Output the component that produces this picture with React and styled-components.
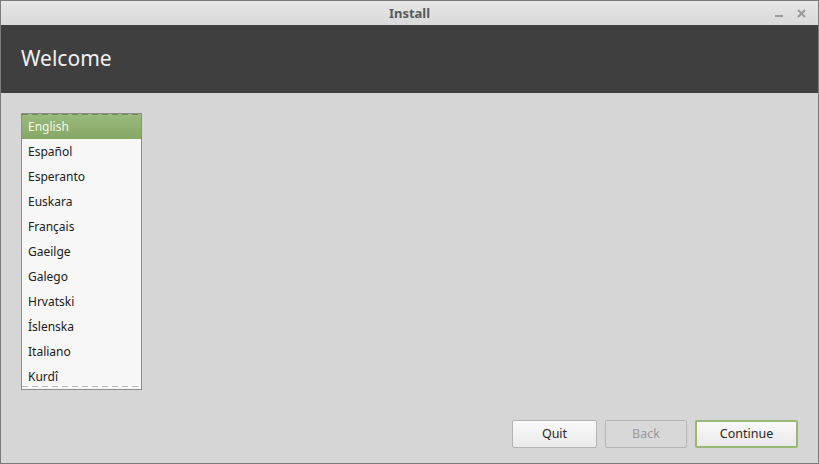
import React from 'react';
import styled, { createGlobalStyle } from 'styled-components';

const GlobalStyle = createGlobalStyle`
    html, body {
        margin : 0;
        padding : 0;
        background : #d6d6d6;
        font-family : "Noto Sans", "DejaVu Sans", sans-serif;
    }
`;

const Window = styled.div`
    box-sizing : border-box;
    width : 819px;
    height : 464px;
    border : 1px solid #7b7b7b;
    display : flex;
    flex-direction : column;
    background : #d6d6d6;
`;

const TitleBar = styled.div`
    height : 24px;
    display : flex;
    align-items : center;
    justify-content : center;
    position : relative;
    background : linear-gradient(#e6e6e6, #d9d9d9);
    color : #5a5a5a;
    font-size : 13px;
    font-weight : bold;
`;

const WindowControls = styled.div`
    position : absolute;
    right : 12px;
    top : 0;
    height : 24px;
    display : flex;
    align-items : center;
    gap : 13px;
`;

const Header = styled.div`
    height : 68px;
    background : #3f3f3f;
    color : #f0f0f0;
    font-size : 21px;
    display : flex;
    align-items : center;
    padding-left : 20px;
    padding-bottom : 2px;
    box-sizing : border-box;
`;

const Body = styled.div`
    flex : 1;
    display : flex;
    flex-direction : column;
    justify-content : space-between;
    padding : 20px 20px 15px 20px;
`;

const List = styled.div`
    width : 119px;
    border : 1px solid #8c8c8c;
    background : #f7f7f7;
    position : relative;
`;

const Row = styled.div`
    height : 25px;
    line-height : 25px;
    padding-left : 6px;
    font-size : 12px;
    color : ${p => (p.selected ? '#f4f7ee' : '#202020')};
    background : ${p => (p.selected ? 'linear-gradient(#9bba7c, #85a765)' : 'transparent')};
`;

const Dashes = styled.div`
    position : absolute;
    left : 0;
    right : 0;
    height : 1px;
    ${p => (p.top ? 'top : 0;' : 'bottom : 2px;')}
    background : repeating-linear-gradient(90deg, ${p => p.color} 0 6px, transparent 6px 10px);
`;

const ButtonRow = styled.div`
    display : flex;
    justify-content : flex-end;
    gap : 8px;
`;

const Button = styled.button`
    box-sizing : border-box;
    height : 28px;
    width : ${p => p.width}px;
    font-family : inherit;
    font-size : 12.5px;
    border-radius : 2px;
    border : ${p => (p.primary ? '2px solid #98b874' : '1px solid #b4b4b4')};
    background : ${p => (p.disabled ? '#d8d8d8' : 'linear-gradient(#f9f9f9, #e9e9e9)')};
    color : ${p => (p.disabled ? '#9a9a9a' : '#2a2a2a')};
    padding : 0 0 1px 0;
`;

const languages = [
    'English', 'Español', 'Esperanto', 'Euskara', 'Français', 'Gaeilge',
    'Galego', 'Hrvatski', 'Íslenska', 'Italiano', 'Kurdî',
];

const App = () => {
    return (
        <Window>
            <GlobalStyle />
            <TitleBar>
                Install
                <WindowControls>
                    <svg width="9" height="9" viewBox="0 0 9 9">
                        <rect x="0" y="6" width="8" height="2" fill="#9a9a9a" />
                    </svg>
                    <svg width="9" height="9" viewBox="0 0 9 9">
                        <path d="M1 1 L8 8 M8 1 L1 8" stroke="#9a9a9a" strokeWidth="2" />
                    </svg>
                </WindowControls>
            </TitleBar>
            <Header>Welcome</Header>
            <Body>
                <List>
                    <Dashes top color="#6f8f52" />
                    {languages.map((lang, i) => (
                        <Row key={lang} selected={i === 0}>{lang}</Row>
                    ))}
                    <Dashes color="#b8b8b8" />
                </List>
                <ButtonRow>
                    <Button width={85}>Quit</Button>
                    <Button width={82} disabled>Back</Button>
                    <Button width={103} primary>Continue</Button>
                </ButtonRow>
            </Body>
        </Window>
    );
};

export default App;
